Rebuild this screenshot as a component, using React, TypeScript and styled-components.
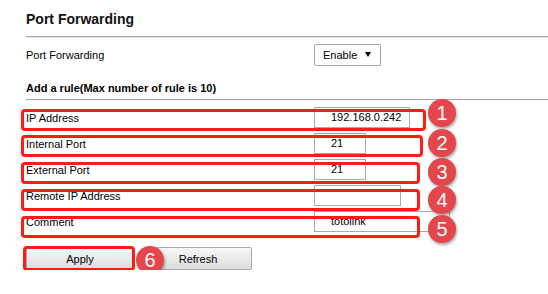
import styled, { createGlobalStyle } from "styled-components";

const GlobalStyle = createGlobalStyle`
  body {
    margin: 0;
    background: #ffffff;
  }
`;

const fields = [
  { label: "IP Address", value: "192.168.0.242", width: 96, box: { top: 5, w: 405 }, badge: -5 },
  { label: "Internal Port", value: "21", width: 52, box: { top: 5, w: 402 }, badge: -1 },
  { label: "External Port", value: "21", width: 52, box: { top: 6, w: 399 }, badge: 2 },
  { label: "Remote IP Address", value: "", width: 87, box: { top: 7, w: 399 }, badge: 4 },
  { label: "Comment", value: "totolink", width: 136, box: { top: 8, w: 399 }, badge: 7 },
];

function App() {
  return (
    <Page>
      <GlobalStyle />
      <Title>Port Forwarding</Title>
      <SettingRow>
        <Label>Port Forwarding</Label>
        <Select>
          Enable
          <Caret />
        </Select>
      </SettingRow>
      <SubHeading>Add a rule(Max number of rule is 10)</SubHeading>
      <Form>
        {fields.map((f, i) => (
          <FieldRow key={f.label}>
            <FieldLabel>{f.label}</FieldLabel>
            <TextInput readOnly value={f.value} $width={f.width} />
            <Highlight $top={f.box.top} $width={f.box.w} />
            <Badge $x={402} $y={f.badge}>
              {i + 1}
            </Badge>
          </FieldRow>
        ))}
      </Form>
      <ButtonRow>
        <ApplyWrap>
          <Button>Apply</Button>
          <ButtonMark />
        </ApplyWrap>
        <Button>Refresh</Button>
        <Badge $x={110} $y={-1}>
          6
        </Badge>
      </ButtonRow>
    </Page>
  );
}

const Page = styled.div`
  padding-left: 26px;
  font-family: "Liberation Sans", Arial, sans-serif;
  color: #000;
`;

const Title = styled.h1`
  margin: 0;
  padding: 11px 0 9px;
  font-size: 14px;
  line-height: 16px;
  font-weight: bold;
  color: #111;
  border-bottom: 1px solid #a2a2a2;
  box-shadow: 0 1px 0 #ececec;
`;

const SettingRow = styled.div`
  display: flex;
  align-items: center;
  height: 36px;
`;

const Label = styled.span`
  width: 288px;
  font-size: 11px;
`;

const Select = styled.div`
  display: flex;
  align-items: center;
  justify-content: space-between;
  box-sizing: border-box;
  width: 67px;
  height: 22px;
  padding: 0 9px 0 8px;
  border: 1px solid #a6a6a6;
  border-radius: 2px;
  font-size: 11px;
`;

const Caret = styled.span`
  width: 0;
  height: 0;
  margin-top: -2px;
  border-left: 3px solid transparent;
  border-right: 3px solid transparent;
  border-top: 5px solid #000;
`;

const SubHeading = styled.div`
  padding: 8px 0 4px;
  font-size: 11px;
  line-height: 14px;
  font-weight: bold;
  border-bottom: 1px solid #a2a2a2;
`;

const Form = styled.div`
  padding-top: 4px;
`;

const FieldRow = styled.div`
  position: relative;
  display: flex;
  align-items: center;
  height: 26px;
`;

const FieldLabel = styled.span`
  width: 288px;
  padding-top: 2px;
  font-size: 11px;
`;

const TextInput = styled.input<{ $width: number }>`
  box-sizing: border-box;
  width: ${(p) => p.$width}px;
  height: 21px;
  margin: 0;
  padding: 0 0 0 16px;
  border: 1px solid #a9a9a9;
  border-radius: 0;
  outline: none;
  font-family: "Liberation Sans", Arial, sans-serif;
  font-size: 11px;
  color: #000;
  background: #fff;
`;

const Highlight = styled.div<{ $top: number; $width: number }>`
  position: absolute;
  left: -5px;
  top: ${(p) => p.$top}px;
  z-index: 1;
  box-sizing: border-box;
  width: ${(p) => p.$width}px;
  height: 22px;
  border: 3px solid #ff1c17;
  border-radius: 4px;
  pointer-events: none;
`;

const Badge = styled.div<{ $x: number; $y: number }>`
  position: absolute;
  left: ${(p) => p.$x}px;
  top: ${(p) => p.$y}px;
  z-index: 2;
  display: flex;
  align-items: center;
  justify-content: center;
  width: 28px;
  height: 28px;
  border-radius: 50%;
  background: #e3474b;
  color: #fff;
  font-family: "Liberation Sans", Arial, sans-serif;
  font-size: 20px;
  box-shadow: 1px 2px 3px rgba(0, 0, 0, 0.35);
`;

const ButtonRow = styled.div`
  position: relative;
  display: flex;
  gap: 10px;
  margin-top: 13px;
`;

const ApplyWrap = styled.div`
  position: relative;
`;

const Button = styled.button`
  box-sizing: border-box;
  width: 108px;
  height: 23px;
  margin: 0;
  padding: 0;
  border: 1px solid #a9a9a9;
  border-radius: 2px;
  background: linear-gradient(#f7f7f7, #dcdcdc);
  font-family: "Liberation Sans", Arial, sans-serif;
  font-size: 11px;
  color: #000;
`;

const ButtonMark = styled.div`
  position: absolute;
  inset: -1px -1px -1px -3px;
  box-sizing: border-box;
  border: 3px solid #ff1c17;
  border-radius: 4px;
  pointer-events: none;
`;

export default App;
